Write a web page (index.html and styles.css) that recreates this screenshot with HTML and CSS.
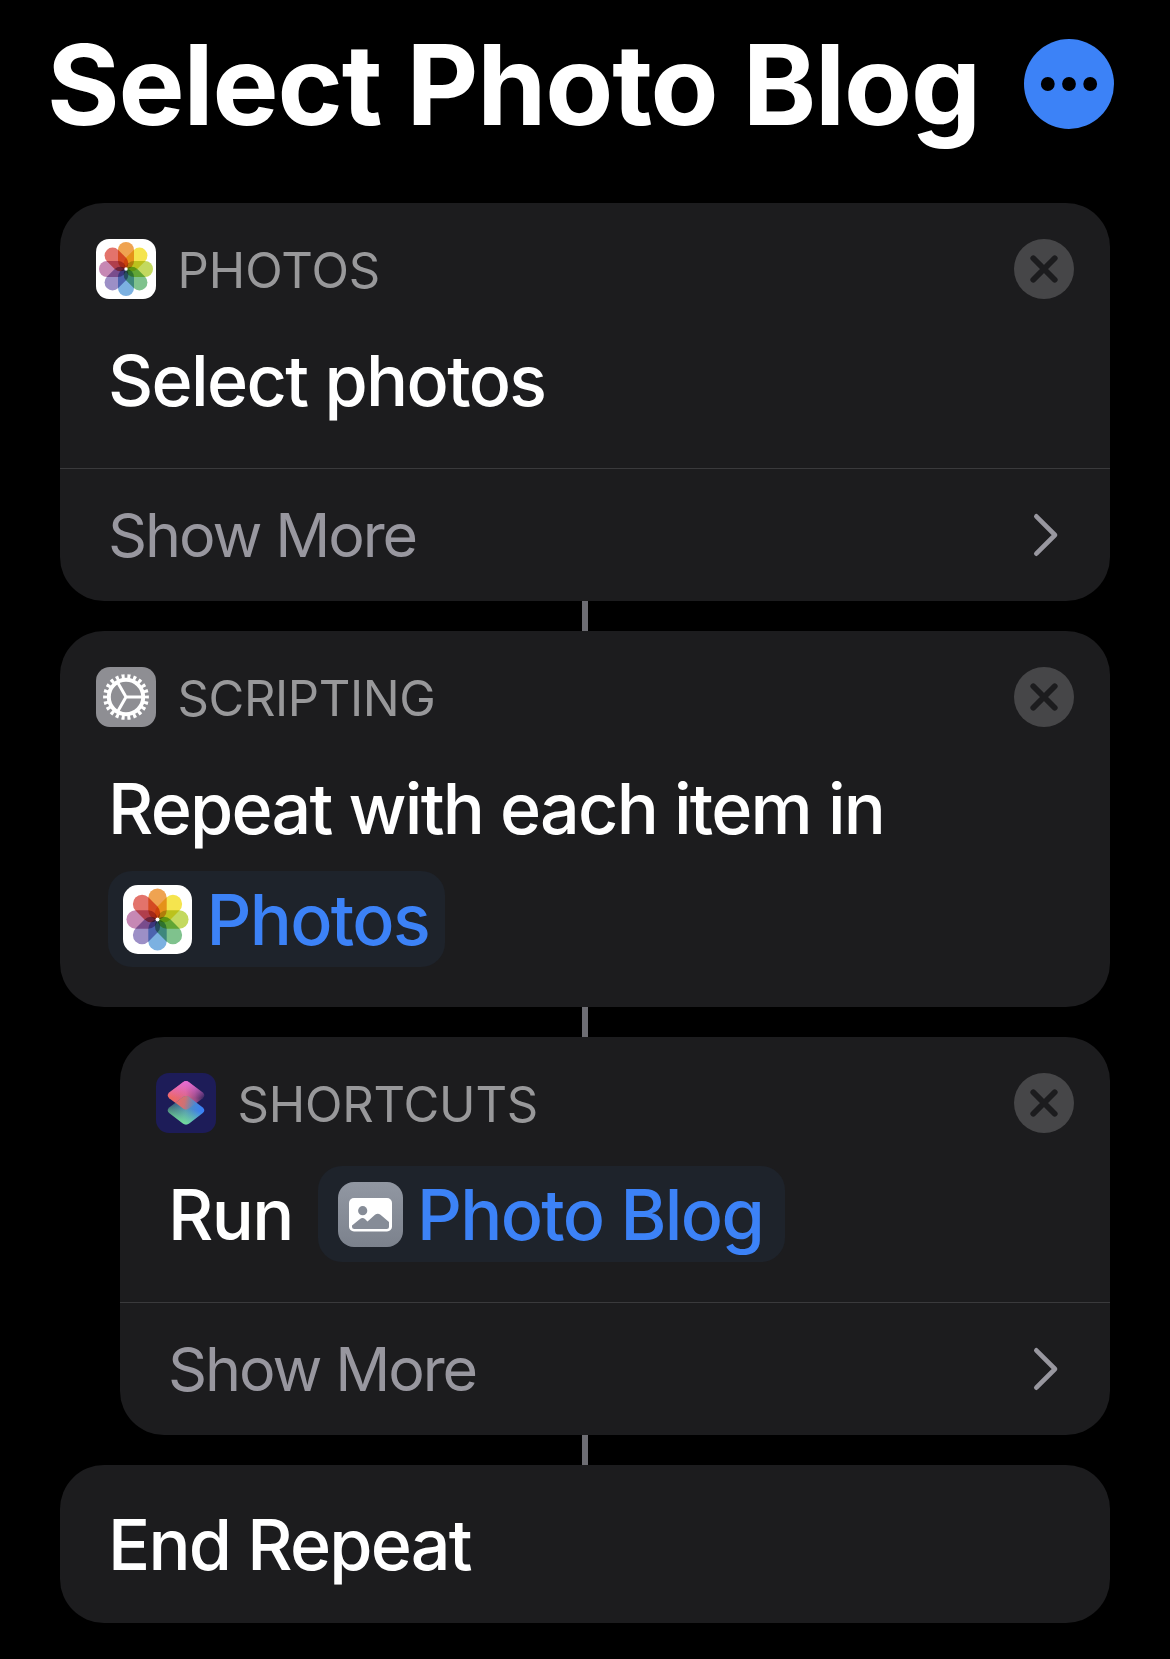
FILE: index.html
```html
<!DOCTYPE html>
<html lang="en">
<head>
<meta charset="utf-8">
<title>Select Photo Blog</title>
<link rel="stylesheet" href="styles.css">
</head>
<body>
<svg class="defs" width="0" height="0" aria-hidden="true">
  <defs>
    <symbol id="photos" viewBox="0 0 60 60">
      <rect width="60" height="60" rx="13" fill="#fff"/>
      <g class="petals">
        <rect x="22" y="3" width="16" height="27" rx="8" fill="#efa351"/>
        <rect x="22" y="3" width="16" height="27" rx="8" fill="#f5e44e" transform="rotate(45 30 30)"/>
        <rect x="22" y="3" width="16" height="27" rx="8" fill="#c3d95f" transform="rotate(90 30 30)"/>
        <rect x="22" y="3" width="16" height="27" rx="8" fill="#7fc28d" transform="rotate(135 30 30)"/>
        <rect x="22" y="3" width="16" height="27" rx="8" fill="#7cb1e1" transform="rotate(180 30 30)"/>
        <rect x="22" y="3" width="16" height="27" rx="8" fill="#9c8fc6" transform="rotate(225 30 30)"/>
        <rect x="22" y="3" width="16" height="27" rx="8" fill="#c688b4" transform="rotate(270 30 30)"/>
        <rect x="22" y="3" width="16" height="27" rx="8" fill="#e3736b" transform="rotate(315 30 30)"/>
      </g>
      <circle cx="30" cy="30" r="1.7" fill="#fff"/>
    </symbol>
    <symbol id="close" viewBox="0 0 60 60">
      <circle cx="30" cy="30" r="30" fill="#464648"/>
      <path d="M19.3 19.3 40.7 40.7M40.7 19.3 19.3 40.7" stroke="#1c1c1e" stroke-width="5.8" stroke-linecap="round"/>
    </symbol>
    <symbol id="chevron" viewBox="0 0 26 44">
      <path d="M3.3 3.3 22 22 3.3 40.7" fill="none" stroke="#98979f" stroke-width="4.6" stroke-linecap="round" stroke-linejoin="round"/>
    </symbol>
  </defs>
</svg>

<header class="titlebar">
  <h1 class="title">Select Photo Blog</h1>
  <svg class="menu" viewBox="0 0 90 90">
    <circle cx="45" cy="45" r="45" fill="#3c82f7"/>
    <circle cx="23.8" cy="45" r="6.9"/>
    <circle cx="45" cy="45" r="6.9"/>
    <circle cx="66.2" cy="45" r="6.9"/>
  </svg>
</header>

<main class="flow">
  <section class="card">
    <div class="card-head">
      <svg class="app-icon"><use href="#photos"/></svg>
      <span class="app-name">PHOTOS</span>
      <svg class="close"><use href="#close"/></svg>
    </div>
    <div class="action"><div class="line"><span>Select photos</span></div></div>
    <div class="more"><span>Show More</span><svg class="chevron"><use href="#chevron"/></svg></div>
  </section>

  <div class="link"></div>

  <section class="card">
    <div class="card-head">
      <svg class="app-icon" viewBox="0 0 60 60">
        <rect width="60" height="60" rx="14" fill="#8e8e93"/>
        <g fill="none" stroke="#fff">
          <circle cx="30" cy="30" r="17.2" stroke-width="4"/>
          <circle cx="30" cy="30" r="20.4" stroke-width="5" pathLength="44" stroke-dasharray="1.04 0.96" stroke-dashoffset="0.52"/>
          <path d="M30 30H46M30 30 22 16.1M30 30 22 43.9" stroke-width="3"/>
        </g>
      </svg>
      <span class="app-name app-scripting">SCRIPTING</span>
      <svg class="close"><use href="#close"/></svg>
    </div>
    <div class="action action-wide">
      <div class="line"><span class="long">Repeat with each item in</span></div>
      <div class="line">
        <span class="chip chip-photos"><svg class="chip-icon"><use href="#photos"/></svg><span>Photos</span></span>
      </div>
    </div>
  </section>

  <div class="link"></div>

  <section class="card nested">
    <div class="card-head">
      <svg class="app-icon" viewBox="0 0 60 60">
        <defs>
          <linearGradient id="top" x1="12" y1="26" x2="48" y2="22" gradientUnits="userSpaceOnUse">
            <stop offset="0" stop-color="#f2695a"/>
            <stop offset=".5" stop-color="#dc6688"/>
            <stop offset=".75" stop-color="#9a4c88"/>
            <stop offset="1" stop-color="#33245f"/>
          </linearGradient>
          <linearGradient id="pink" x1="30" y1="8" x2="30" y2="25" gradientUnits="userSpaceOnUse">
            <stop offset="0" stop-color="#e66cd8"/>
            <stop offset="1" stop-color="#e66cd8" stop-opacity="0"/>
          </linearGradient>
          <linearGradient id="bottom" x1="13" y1="34" x2="46" y2="38" gradientUnits="userSpaceOnUse">
            <stop offset="0" stop-color="#33506e"/>
            <stop offset=".5" stop-color="#5492b4"/>
            <stop offset="1" stop-color="#3a80f6"/>
          </linearGradient>
          <linearGradient id="green" x1="27" y1="52" x2="32" y2="35" gradientUnits="userSpaceOnUse">
            <stop offset="0" stop-color="#76e398"/>
            <stop offset="1" stop-color="#76e398" stop-opacity="0"/>
          </linearGradient>
          <linearGradient id="blend" x1="20" y1="29" x2="39" y2="33" gradientUnits="userSpaceOnUse">
            <stop offset="0" stop-color="#e96b66"/>
            <stop offset=".45" stop-color="#cc7276"/>
            <stop offset="1" stop-color="#8a80a8" stop-opacity=".15"/>
          </linearGradient>
          <path id="tile" d="M27 9.2Q30 7 33 9.2L46.8 19.6Q49.8 22.4 46.8 25.2L33 35.6Q30 37.8 27 35.6L13.2 25.2Q10.2 22.4 13.2 19.6Z"/>
        </defs>
        <rect width="60" height="60" rx="13" fill="#1d1c58"/>
        <use href="#tile" fill="url(#top)"/>
        <use href="#tile" fill="url(#pink)"/>
        <path d="M27 24Q30 21.8 33 24L46.8 34.4Q49.8 37.2 46.8 40L33 50.4Q30 52.6 27 50.4L13.2 40Q10.2 37.2 13.2 34.4Z" fill="url(#bottom)"/>
        <path d="M27 24Q30 21.8 33 24L46.8 34.4Q49.8 37.2 46.8 40L33 50.4Q30 52.6 27 50.4L13.2 40Q10.2 37.2 13.2 34.4Z" fill="url(#green)"/>
        <path d="M27 24Q30 21.8 33 24L40.5 29.8 33 35.6Q30 37.8 27 35.6L19.5 29.8Z" fill="url(#blend)"/>
      </svg>
      <span class="app-name app-shortcuts">SHORTCUTS</span>
      <svg class="close"><use href="#close"/></svg>
    </div>
    <div class="action">
      <div class="line">
        <span>Run</span>
        <span class="chip chip-blog">
          <svg class="blog-icon" viewBox="0 0 65 65">
            <defs>
              <linearGradient id="slate" x1="0" y1="0" x2="0" y2="1"><stop offset="0" stop-color="#9197a2"/><stop offset="1" stop-color="#7c828d"/></linearGradient>
            </defs>
            <rect width="65" height="65" rx="16" fill="url(#slate)"/>
            <rect x="11" y="16" width="43" height="33.5" rx="5" fill="#fff"/>
            <circle cx="24.7" cy="28.7" r="4.6" fill="#868c97"/>
            <path d="M14 43.5 22 37Q24.5 35 27 37L29.5 39.5 37 32.8Q39.8 30.5 42.5 32.8L51 40V44.5Q51 47 48.5 47H16.5Q14 47 14 44.5Z" fill="#868c97"/>
          </svg><span>Photo Blog</span>
        </span>
      </div>
    </div>
    <div class="more"><span>Show More</span><svg class="chevron"><use href="#chevron"/></svg></div>
  </section>

  <div class="link"></div>

  <section class="card card-end"><span>End Repeat</span></section>
</main>
</body>
</html>
```
FILE: styles.css
```css
* { box-sizing: border-box; }

body {
  margin: 0;
  height: 1659px;
  background: #000;
  color: #fff;
  font-family: Inter, "Liberation Sans", sans-serif;
  white-space: nowrap;
  overflow: hidden;
}

svg { display: block; flex: none; }
.defs { height: 0; }

.titlebar {
  display: flex;
  align-items: center;
  justify-content: space-between;
  height: 203px;
  padding: 0 56px 35px 47px;
}
.title {
  margin: 0;
  padding-top: 2px;
  font-size: 111px;
  font-weight: 700;
  line-height: 120px;
  letter-spacing: -1.12px;
}
.menu { width: 90px; height: 90px; }

.flow {
  display: flex;
  flex-direction: column;
  padding: 0 60px;
}
.card {
  background: #1c1c1e;
  border-radius: 44px;
}
.nested { margin-left: 60px; }
.link {
  width: 6px;
  height: 30px;
  margin-left: 522px;
  background: #6d6d73;
}

.card-head {
  display: flex;
  align-items: center;
  height: 96px;
  padding: 36px 36px 0;
}
.app-icon, .close { width: 60px; height: 60px; }
.close { margin-left: auto; }
.app-name {
  padding: 2px 0 0 21.5px;
  font-size: 49px;
  color: #98989a;
}
.app-scripting { letter-spacing: -0.4px; }
.app-shortcuts { letter-spacing: -0.2px; }
.petals { isolation: isolate; }
.petals rect { mix-blend-mode: multiply; }

.action {
  padding: 26px 48px 33px;
  font-size: 70px;
  font-weight: 500;
  letter-spacing: -1.65px;
}
.action-wide {
  display: grid;
  gap: 1px;
}
.long { letter-spacing: -1.76px; }
.line {
  display: flex;
  align-items: center;
  height: 110px;
}
.chip {
  display: flex;
  align-items: center;
  height: 96px;
  border-radius: 24px;
  background: #1e232b;
  color: #3c82f7;
}
.chip-photos { width: 337px; padding-left: 15px; }
.chip-blog {
  width: 467px;
  padding-left: 20px;
  margin-left: auto;
  margin-right: 277px;
}
.chip-icon { width: 69px; height: 69px; margin-right: 14.5px; }
.blog-icon { width: 65px; height: 65px; margin-right: 14px; }

.more {
  display: flex;
  align-items: center;
  justify-content: space-between;
  height: 133px;
  padding: 0 51px 0 48px;
  border-top: 1px solid #3a3a3c;
  font-size: 61px;
  letter-spacing: -2.1px;
  color: #98979f;
}
.chevron { width: 26px; height: 44px; }

.card-end {
  display: flex;
  align-items: center;
  height: 158px;
  padding: 0 48px;
  font-size: 70px;
  font-weight: 500;
  letter-spacing: -1.75px;
}
```
